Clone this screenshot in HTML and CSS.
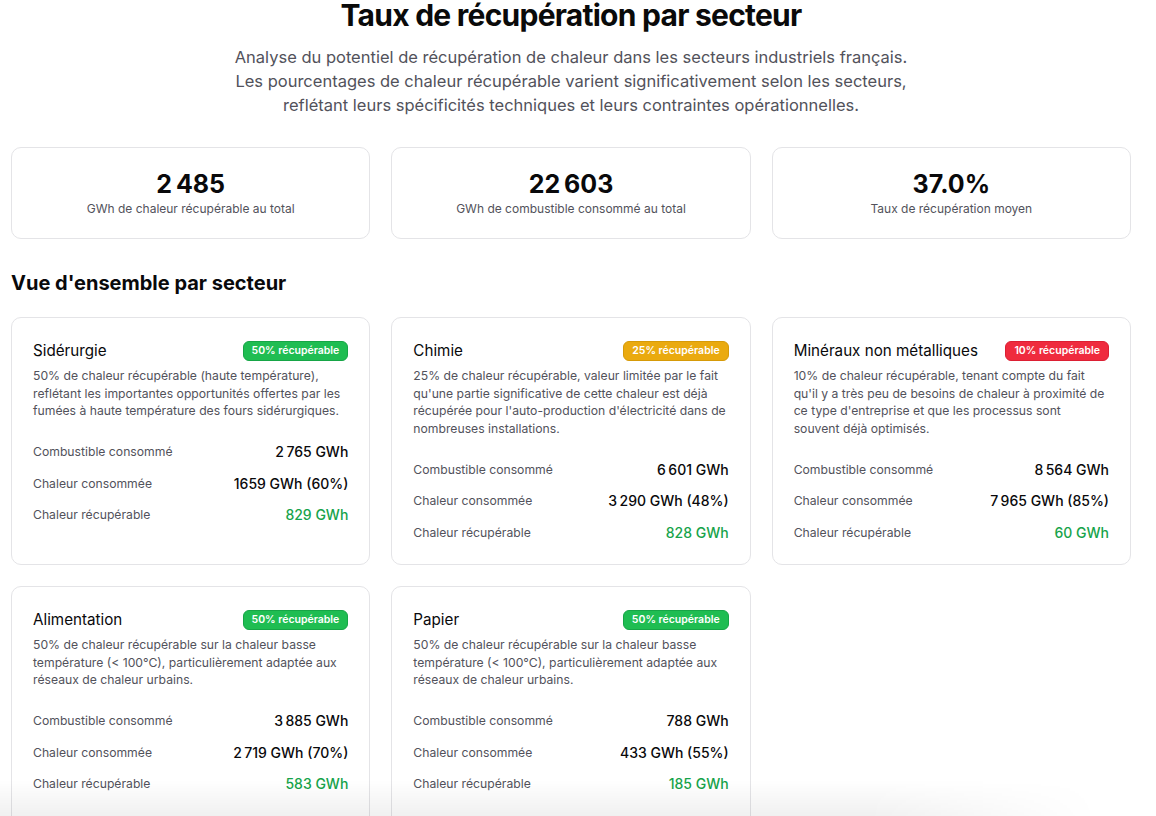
FILE: index.html
```html
<!DOCTYPE html>
<html lang="fr">
<head>
<meta charset="utf-8">
<title>Taux de récupération par secteur</title>
<link rel="stylesheet" href="styles.css">
</head>
<body>
<main class="page">
  <header class="intro">
    <h1 class="title">Taux de récupération par secteur</h1>
    <p class="lead">Analyse du potentiel de récupération de chaleur dans les secteurs industriels français.<br>Les pourcentages de chaleur récupérable varient significativement selon les secteurs,<br>reflétant leurs spécificités techniques et leurs contraintes opérationnelles.</p>
  </header>

  <section class="stats">
    <div class="stat">
      <div class="stat-value">2&#8239;485</div>
      <div class="stat-label">GWh de chaleur récupérable au total</div>
    </div>
    <div class="stat">
      <div class="stat-value">22&#8239;603</div>
      <div class="stat-label">GWh de combustible consommé au total</div>
    </div>
    <div class="stat">
      <div class="stat-value">37.0%</div>
      <div class="stat-label">Taux de récupération moyen</div>
    </div>
  </section>

  <h2 class="section-title">Vue d'ensemble par secteur</h2>

  <section class="sectors">
    <article class="card">
      <div class="card-head">
        <h3 class="card-title">Sidérurgie</h3>
        <span class="badge badge-green">50% récupérable</span>
      </div>
      <p class="card-desc">50% de chaleur récupérable (haute température), reflétant les importantes opportunités offertes par les fumées à haute température des fours sidérurgiques.</p>
      <dl class="rows">
        <div class="row"><dt>Combustible consommé</dt><dd>2&#8239;765 GWh</dd></div>
        <div class="row"><dt>Chaleur consommée</dt><dd>1659 GWh (60%)</dd></div>
        <div class="row"><dt>Chaleur récupérable</dt><dd class="green">829 GWh</dd></div>
      </dl>
    </article>

    <article class="card">
      <div class="card-head">
        <h3 class="card-title">Chimie</h3>
        <span class="badge badge-yellow">25% récupérable</span>
      </div>
      <p class="card-desc">25% de chaleur récupérable, valeur limitée par le fait qu'une partie significative de cette chaleur est déjà récupérée pour l'auto-production d'électricité dans de nombreuses installations.</p>
      <dl class="rows">
        <div class="row"><dt>Combustible consommé</dt><dd>6&#8239;601 GWh</dd></div>
        <div class="row"><dt>Chaleur consommée</dt><dd>3&#8239;290 GWh (48%)</dd></div>
        <div class="row"><dt>Chaleur récupérable</dt><dd class="green">828 GWh</dd></div>
      </dl>
    </article>

    <article class="card">
      <div class="card-head">
        <h3 class="card-title">Minéraux non métalliques</h3>
        <span class="badge badge-red">10% récupérable</span>
      </div>
      <p class="card-desc">10% de chaleur récupérable, tenant compte du fait qu'il y a très peu de besoins de chaleur à proximité de ce type d'entreprise et que les processus sont souvent déjà optimisés.</p>
      <dl class="rows">
        <div class="row"><dt>Combustible consommé</dt><dd>8&#8239;564 GWh</dd></div>
        <div class="row"><dt>Chaleur consommée</dt><dd>7&#8239;965 GWh (85%)</dd></div>
        <div class="row"><dt>Chaleur récupérable</dt><dd class="green">60 GWh</dd></div>
      </dl>
    </article>

    <article class="card">
      <div class="card-head">
        <h3 class="card-title">Alimentation</h3>
        <span class="badge badge-green">50% récupérable</span>
      </div>
      <p class="card-desc">50% de chaleur récupérable sur la chaleur basse température (&lt; 100°C), particulièrement adaptée aux réseaux de chaleur urbains.</p>
      <dl class="rows">
        <div class="row"><dt>Combustible consommé</dt><dd>3&#8239;885 GWh</dd></div>
        <div class="row"><dt>Chaleur consommée</dt><dd>2&#8239;719 GWh (70%)</dd></div>
        <div class="row"><dt>Chaleur récupérable</dt><dd class="green">583 GWh</dd></div>
      </dl>
    </article>

    <article class="card">
      <div class="card-head">
        <h3 class="card-title">Papier</h3>
        <span class="badge badge-green">50% récupérable</span>
      </div>
      <p class="card-desc">50% de chaleur récupérable sur la chaleur basse température (&lt; 100°C), particulièrement adaptée aux réseaux de chaleur urbains.</p>
      <dl class="rows">
        <div class="row"><dt>Combustible consommé</dt><dd>788 GWh</dd></div>
        <div class="row"><dt>Chaleur consommée</dt><dd>433 GWh (55%)</dd></div>
        <div class="row"><dt>Chaleur récupérable</dt><dd class="green">185 GWh</dd></div>
      </dl>
    </article>
  </section>
</main>
<div class="bottom-shade"></div>
</body>
</html>
```

FILE: styles.css
```css
* { box-sizing: border-box; }

html, body {
  margin: 0;
  padding: 0;
  background: #ffffff;
  overflow: hidden;
}

body {
  font-family: Inter, "Noto Sans", "Liberation Sans", sans-serif;
  color: #0a0a0a;
}

.page {
  width: 1120px;
  margin-left: 11px;
}

.intro {
  text-align: center;
}

.title {
  margin: -5px 0 0;
  font-size: 30px;
  line-height: 40px;
  font-weight: 700;
  letter-spacing: -0.025em;
  color: #0a0a0a;
}

.lead {
  margin: 10px 0 0;
  font-size: 16.5px;
  line-height: 24px;
  color: #52525b;
}

.stats {
  margin-top: 30px;
  display: grid;
  grid-template-columns: repeat(3, 1fr);
  gap: 21px;
}

.stat {
  border: 1px solid #e4e4e7;
  border-radius: 10px;
  padding: 20px 16px;
  text-align: center;
  height: 92px;
}

.stat-value {
  font-size: 25px;
  line-height: 32px;
  font-weight: 700;
  color: #09090b;
}

.stat-label {
  font-size: 12px;
  line-height: 18px;
  color: #52525b;
}

.section-title {
  margin: 30px 0 20px;
  font-size: 20px;
  line-height: 28px;
  font-weight: 700;
  color: #09090b;
}

.sectors {
  display: grid;
  grid-template-columns: repeat(3, 1fr);
  gap: 21px;
}

.card {
  border: 1px solid #e4e4e7;
  border-radius: 10px;
  padding: 20px 21px 20px 21px;
  min-height: 248px;
}

.card-head {
  display: flex;
  align-items: center;
  justify-content: space-between;
  height: 26px;
}

.card-title {
  margin: 0;
  font-size: 15.2px;
  line-height: 24px;
  font-weight: 400;
  color: #09090b;
}

.badge {
  display: inline-block;
  font-size: 10.5px;
  line-height: 16px;
  font-weight: 600;
  color: #ffffff;
  padding: 1px 8px;
  border-radius: 6px;
  border: 1px solid transparent;
}

.badge-green { background: #1fbd52; border-color: #16a546; }
.badge-yellow { background: #eaaa0f; border-color: #d69a08; }
.badge-red { background: #ef2b3e; border-color: #dc1f33; }

.card-desc {
  margin: 3px 0 0;
  font-size: 12.2px;
  line-height: 17.5px;
  color: #52525b;
}

.rows {
  margin: 20px 0 0;
  display: flex;
  flex-direction: column;
  gap: 7.5px;
}

.row {
  display: flex;
  justify-content: space-between;
  align-items: center;
  height: 24px;
}

.row dt {
  font-size: 12.2px;
  color: #52525b;
}

.row dd {
  margin: 0;
  font-size: 14px;
  font-weight: 500;
  color: #09090b;
}

.row dd.green {
  color: #16a34a;
}

.bottom-shade {
  position: fixed;
  left: 0;
  right: 0;
  bottom: 0;
  height: 36px;
  pointer-events: none;
  background: linear-gradient(to bottom, rgba(0,0,0,0), rgba(0,0,0,0.06));
  -webkit-mask-image: linear-gradient(to right, #000 0%, #000 75%, transparent 95%);
  mask-image: linear-gradient(to right, #000 0%, #000 75%, transparent 95%);
}
```
